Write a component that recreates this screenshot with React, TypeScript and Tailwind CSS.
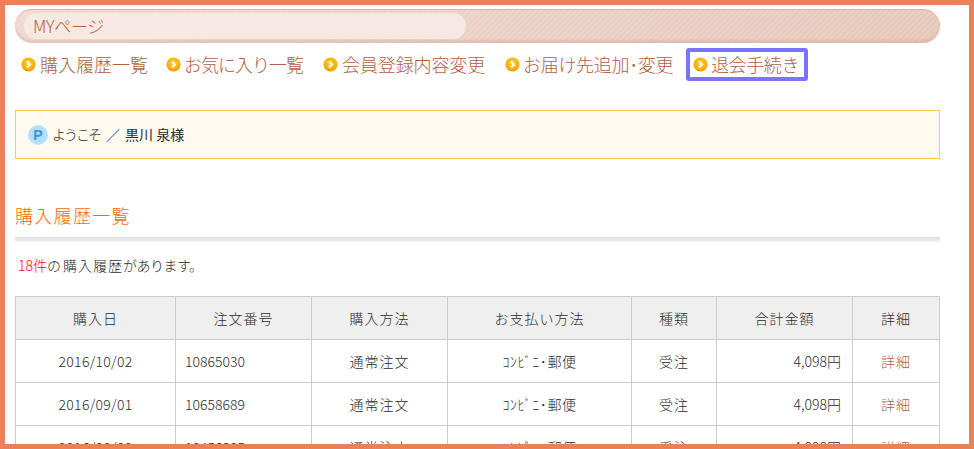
const navItems = [
  { label: "購入履歴一覧", cls: "ml-[4px] mr-[19px] w-[107px] tracking-[0px]" },
  { label: "お気に入り一覧", cls: "ml-[3px] mr-[19px] w-[120px] tracking-[-1px]" },
  { label: "会員登録内容変更", cls: "ml-[4px] mr-[19px] w-[144px] tracking-[-0.1px]" },
  { label: "お届け先追加･変更", cls: "ml-[3px] mr-[11px] w-[152px] tracking-[-0.3px]" },
]

const columns = ["w-[160px]", "w-[136px]", "w-[136px]", "w-[184px]", "w-[85px]", "w-[136px]", "w-[87px]"]
const headers = ["購入日", "注文番号", "購入方法", "お支払い方法", "種類", "合計金額", "詳細"]

const orders = [
  { date: "2016/10/02", no: "10865030" },
  { date: "2016/09/01", no: "10658689" },
  { date: "2016/08/02", no: "10456305" },
]

function ArrowIcon() {
  return (
    <svg width="15" height="15" viewBox="0 0 15 15" className="shrink-0">
      <defs>
        <radialGradient id="dot" cx="50%" cy="40%" r="60%">
          <stop offset="0%" stopColor="#ffd23c" />
          <stop offset="70%" stopColor="#fbb000" />
          <stop offset="100%" stopColor="#ee9000" />
        </radialGradient>
      </defs>
      <circle cx="7.5" cy="7.5" r="7" fill="url(#dot)" />
      <path d="M6 4.5 L9 7.5 L6 10.5" fill="none" stroke="#fff" strokeWidth="2" />
    </svg>
  )
}

export default function App() {
  return (
    <div className="w-[974px] h-[449px] overflow-hidden border-[5px] border-[#e9825a] bg-white pl-[10px] pr-[29px] text-[#2b2b2b] font-light font-['Noto_Sans_CJK_JP','Liberation_Sans',sans-serif] text-[14px]">
      {/* タイトルバー */}
      <div className="mt-[4px] h-[34px] rounded-full border-t border-[#d9b3a5] p-[3px_9px] bg-[repeating-linear-gradient(135deg,rgba(255,255,255,0.1)_0_2px,rgba(255,255,255,0)_2px_4px),linear-gradient(90deg,#efd9d0,#e6c8ba)] shadow-[inset_0_-3px_2px_rgba(205,150,130,0.3)]">
        <div className="w-[442px] h-[26px] rounded-full bg-[#f6e9e4] pl-[9px] text-[17px] leading-[25px] text-[#b5603f] tracking-[-0.3px]">
          MYページ
        </div>
      </div>

      {/* メニュー */}
      <div className="mt-[5px] h-[33px] flex items-center pl-[6px] text-[18px] text-[#b05f3f]">
        {navItems.map((item) => (
          <div key={item.label} className="flex items-center">
            <ArrowIcon />
            <span className={`whitespace-nowrap ${item.cls}`}>{item.label}</span>
          </div>
        ))}
        <div className="h-[33px] w-[122px] flex items-center border-[4px] border-[#7b73ff] rounded-[3px] pl-[3px]">
          <ArrowIcon />
          <span className="ml-[3px] whitespace-nowrap tracking-[-0.4px]">退会手続き</span>
        </div>
      </div>

      {/* ようこそ */}
      <div className="mt-[29px] h-[49px] flex items-center border border-[#fdc95c] bg-[#fffaf0] pl-[12px]">
        <span className="w-[20px] h-[20px] rounded-full bg-[radial-gradient(circle,#a9dbf6_0%,#b5e0f8_60%,#d3eefc_100%)] flex items-center justify-center text-[14px] leading-none font-bold text-[#3f97cf] font-['Liberation_Sans',sans-serif]">
          P
        </span>
        <span className="ml-[4px] tracking-[-2px]">ようこそ</span>
        <span className="ml-[6px]">／</span>
        <span className="ml-[5px] font-normal">黒川 泉様</span>
      </div>

      {/* 購入履歴 */}
      <h2 className="mt-[43px] h-[26px] text-[18px] leading-[26px] tracking-[1.3px] text-[#ff6a00]">購入履歴一覧</h2>
      <div className="mt-[9px] h-[5px] bg-[linear-gradient(#dcdcdc,#f4f4f4)]" />
      <p className="mt-[13px] h-[20px] pl-[3px] leading-[20px] whitespace-nowrap">
        <span className="text-[#ff0000]">18件</span>
        <span className="tracking-[2px]">の</span>
        <span className="tracking-[1px]">購入履歴</span>
        <span className="tracking-[-0.5px]">があります。</span>
      </p>

      <table className="mt-[21px] table-fixed border-collapse w-[925px] text-center">
        <colgroup>
          {columns.map((c, i) => (
            <col key={i} className={c} />
          ))}
        </colgroup>
        <thead>
          <tr className="h-[43px] bg-[#efefef]">
            {headers.map((h) => (
              <th key={h} className="border border-[#cccccc] font-light tracking-[1px]">
                {h}
              </th>
            ))}
          </tr>
        </thead>
        <tbody>
          {orders.map((o) => (
            <tr key={o.no} className="h-[43px]">
              <td className="border border-[#cccccc] tracking-[0.3px]">{o.date}</td>
              <td className="border border-[#cccccc] text-left pl-[9px]">{o.no}</td>
              <td className="border border-[#cccccc] tracking-[1px]">通常注文</td>
              <td className="border border-[#cccccc] tracking-[0.6px]">ｺﾝﾋﾞﾆ･郵便</td>
              <td className="border border-[#cccccc] tracking-[1px]">受注</td>
              <td className="border border-[#cccccc] text-right pr-[11px]">4,098円</td>
              <td className="border border-[#cccccc] text-[#b05f3f] tracking-[1px]">詳細</td>
            </tr>
          ))}
        </tbody>
      </table>
    </div>
  )
}
